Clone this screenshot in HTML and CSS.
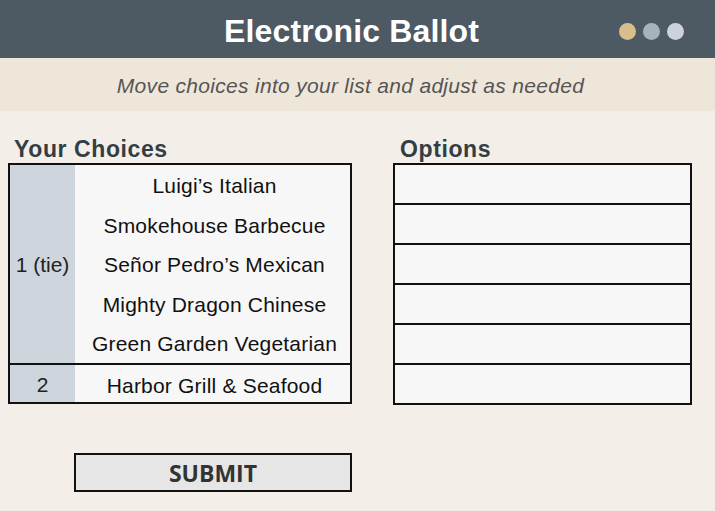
FILE: index.html
```html
<!DOCTYPE html>
<html lang="en">
<head>
    <meta charset="UTF-8">
    <meta name="viewport" content="width=device-width, initial-scale=1.0">
    <title>Electronic Ballot</title>
    <link rel="stylesheet" href="styles.css">
</head>
<body>
    <header class="ballot-header">
        <h1 class="ballot-title">Electronic Ballot</h1>
        <div class="window-dots">
            <span class="dot dot-gold"></span>
            <span class="dot dot-grey"></span>
            <span class="dot dot-light"></span>
        </div>
    </header>

    <div class="ballot-hint">
        <p>Move choices into your list and adjust as needed</p>
    </div>

    <main class="ballot-body">
        <section class="choices">
            <h2 class="column-title">Your Choices</h2>
            <div class="choice-table">
                <div class="rank-group">
                    <div class="rank-cell">1 (tie)</div>
                    <ul class="rank-names">
                        <li>Luigi’s Italian</li>
                        <li>Smokehouse Barbecue</li>
                        <li>Señor Pedro’s Mexican</li>
                        <li>Mighty Dragon Chinese</li>
                        <li>Green Garden Vegetarian</li>
                    </ul>
                </div>
                <div class="rank-group">
                    <div class="rank-cell">2</div>
                    <ul class="rank-names">
                        <li>Harbor Grill &amp; Seafood</li>
                    </ul>
                </div>
            </div>
            <button type="button" class="btn-submit">SUBMIT</button>
        </section>

        <section class="options">
            <h2 class="column-title">Options</h2>
            <ul class="option-list">
                <li></li>
                <li></li>
                <li></li>
                <li></li>
                <li></li>
                <li></li>
            </ul>
        </section>
    </main>
</body>
</html>
```

FILE: styles.css
```css
:root {
    --header-bg: #4d5963;
    --hint-bg: #efe6da;
    --page-bg: #f3efe8;
    --rank-bg: #cfd5dd;
    --cell-bg: #f7f7f7;
    --heading: #333d45;
}

* {
    box-sizing: border-box;
    margin: 0;
    padding: 0;
}

body {
    background: var(--page-bg);
    font-family: 'Liberation Sans', Arial, sans-serif;
    color: #111;
    min-height: 100vh;
}

/* 顶部标题栏 */
.ballot-header {
    position: relative;
    height: 58px;
    padding-right: 12px;
    background: var(--header-bg);
    display: flex;
    align-items: center;
    justify-content: center;
}

.ballot-title {
    color: #fff;
    font-size: 32px;
    font-weight: 700;
    letter-spacing: 0.15px;
    margin-top: 4px;
}

.window-dots {
    position: absolute;
    right: 31px;
    top: 23px;
    display: flex;
    gap: 7px;
}

.dot {
    width: 17px;
    height: 17px;
    border-radius: 50%;
}

.dot-gold { background: #d9bd8c; }
.dot-grey { background: #a9b2ba; }
.dot-light { background: #ccd3da; }

.ballot-hint {
    height: 53px;
    padding-right: 14px;
    background: var(--hint-bg);
    display: flex;
    align-items: center;
    justify-content: center;
}

.ballot-hint p {
    font-size: 21px;
    font-style: italic;
    letter-spacing: 0.3px;
    color: #555;
    margin-top: 2px;
}

/* 主体两列 */
.ballot-body {
    display: flex;
    gap: 41px;
    padding: 24px 0 0 8px;
}

.column-title {
    font-size: 23px;
    font-weight: 700;
    letter-spacing: 0.6px;
    color: var(--heading);
    padding-left: 6px;
    height: 28px;
    line-height: 29px;
}

.choices {
    width: 344px;
}

.choice-table {
    border: 2px solid #111;
    background: var(--cell-bg);
}

.rank-group {
    display: flex;
}

.rank-group + .rank-group {
    border-top: 2px solid #111;
}

.rank-cell {
    width: 65px;
    flex-shrink: 0;
    background: var(--rank-bg);
    display: flex;
    align-items: center;
    justify-content: center;
    font-size: 21px;
    color: #222;
    padding-top: 3px;
}

.rank-names {
    flex: 1;
    list-style: none;
    padding-left: 4px;
}

.rank-names li {
    height: 39.6px;
    line-height: 41px;
    text-align: center;
    font-size: 21px;
    letter-spacing: 0.2px;
}

.rank-group + .rank-group .rank-names li {
    height: 37px;
    line-height: 41px;
}

.btn-submit {
    display: block;
    margin: 49px 0 0 66px;
    width: 278px;
    height: 39px;
    border: 2px solid #111;
    background: #e6e6e6;
    font-family: 'Open Sans', sans-serif;
    font-size: 23px;
    font-weight: 700;
    color: #333;
    padding-top: 2px;
    cursor: pointer;
}

.options {
    width: 299px;
}

.options .column-title {
    padding-left: 7px;
}

.option-list {
    list-style: none;
}

.option-list li {
    height: 42px;
    border: 2px solid #111;
    background: var(--cell-bg);
}

.option-list li + li {
    margin-top: -2px;
}
```
